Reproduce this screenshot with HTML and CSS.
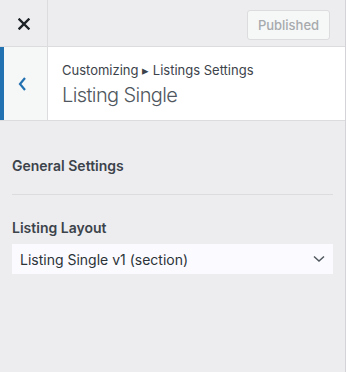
FILE: index.html
```html
<!DOCTYPE html>
<html lang="en">
<head>
  <meta charset="UTF-8">
  <meta name="viewport" content="width=device-width, initial-scale=1.0">
  <title>Customizer</title>
  <link rel="stylesheet" href="styles.css">
</head>
<body>

<div id="customizer">
  <div class="header">
    <button class="close-btn" aria-label="Close">
      <svg width="12" height="12" viewBox="0 0 12 12"><path d="M1.5 1.5 L10.5 10.5 M10.5 1.5 L1.5 10.5" stroke="#1d2327" stroke-width="2.4" stroke-linecap="square"/></svg>
    </button>
    <div class="header-actions">
      <button class="publish-btn" disabled>Published</button>
    </div>
  </div>

  <div class="section-title">
    <button class="back-btn" aria-label="Back">
      <svg width="9" height="14" viewBox="0 0 9 14"><path d="M7 1 L2 7 L7 13" fill="none" stroke="#2271b1" stroke-width="2.2"/></svg>
    </button>
    <div class="title-text">
      <span class="crumb">Customizing &#9656; Listings Settings</span>
      <h3>Listing Single</h3>
    </div>
  </div>

  <div class="controls">
    <h4 class="group-title">General Settings</h4>
    <hr>
    <label class="control-label" for="layout">Listing Layout</label>
    <div class="select-wrap">
      <select id="layout">
        <option>Listing Single v1 (section)</option>
      </select>
      <svg class="select-arrow" width="12" height="8" viewBox="0 0 12 8"><path d="M1 1.5 L6 6 L11 1.5" fill="none" stroke="#50575e" stroke-width="1.5"/></svg>
    </div>
  </div>
</div>

</body>
</html>
```

FILE: styles.css
```css
html, body {
  margin: 0;
  padding: 0;
  height: 100%;
}
body {
  font-family: Inter, "Noto Sans", sans-serif;
  background: #fff;
}
#customizer {
  width: 345px;
  height: 372px;
  background: #ededf0;
  border-right: 1px solid #d4d4d8;
  box-sizing: content-box;
}
.header {
  display: flex;
  height: 46px;
  border-bottom: 1px solid #dcdcde;
  background: #ededf0;
}
.close-btn {
  width: 48px;
  height: 46px;
  border: none;
  border-right: 1px solid #dcdcde;
  background: #ededf0;
  display: flex;
  align-items: center;
  justify-content: center;
  padding: 2px 0 0 0;
}
.header-actions {
  flex: 1;
  display: flex;
  justify-content: flex-end;
  align-items: flex-start;
  padding: 10px 15px 0 0;
}
.publish-btn {
  width: 83px;
  height: 30px;
  font-family: inherit;
  font-size: 13px;
  font-weight: 500;
  color: #a7aaad;
  background: #f6f7f7;
  border: 1px solid #dcdcde;
  border-radius: 3px;
  padding: 0;
}
.section-title {
  display: flex;
  height: 73px;
  background: #fff;
  border-bottom: 1px solid #dcdcde;
}
.back-btn {
  width: 48px;
  height: 73px;
  border: none;
  border-left: 4px solid #2271b1;
  border-right: 1px solid #dcdcde;
  background: #f6f7f7;
  display: flex;
  align-items: center;
  justify-content: center;
  padding: 0 6px 0 0;
}
.title-text {
  padding: 15px 0 0 14px;
  color: #50575e;
}
.crumb {
  display: block;
  font-size: 13px;
  line-height: 16px;
  color: #3c434a;
}
.title-text h3 {
  margin: 4px 0 0;
  font-size: 20px;
  font-weight: 300;
  letter-spacing: -0.6px;
  line-height: 26px;
  color: #50575e;
}
.controls {
  padding: 0 12px 0 12px;
}
.group-title {
  margin: 0;
  padding-top: 36px;
  font-size: 14px;
  font-weight: 600;
  line-height: 18px;
  color: #3c434a;
}
hr {
  border: none;
  border-top: 1px solid #dcdcde;
  margin: 19px 0 24px;
}
.control-label {
  display: block;
  font-size: 14px;
  font-weight: 600;
  line-height: 18px;
  color: #3c434a;
  margin-bottom: 7px;
}
.select-wrap {
  position: relative;
  width: 321px;
}
select {
  appearance: none;
  -webkit-appearance: none;
  width: 100%;
  height: 30px;
  border: none;
  border-radius: 0;
  background: #fbfbff;
  font-family: inherit;
  font-size: 14px;
  color: #2c3338;
  padding: 0 30px 0 8px;
}
.select-arrow {
  position: absolute;
  right: 8px;
  top: 11px;
  pointer-events: none;
}
```
